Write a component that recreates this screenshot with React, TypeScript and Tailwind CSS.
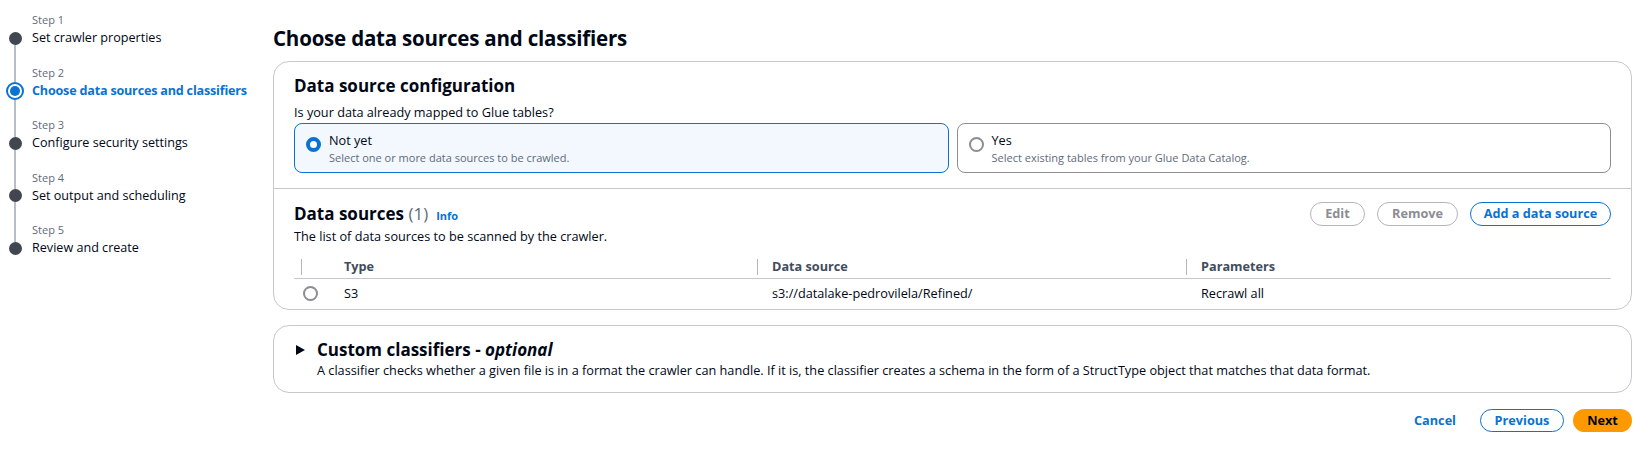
import React from "react";

const font = { fontFamily: '"Open Sans", "Noto Sans", sans-serif' };

function Radio({ checked }: { checked: boolean }) {
  return checked ? (
    <span className="inline-block w-[15px] h-[15px] rounded-full border-[4.5px] border-[#0972d3] bg-white shrink-0" />
  ) : (
    <span className="inline-block w-[15px] h-[15px] rounded-full border-2 border-[#8c8c94] bg-white shrink-0" />
  );
}

const steps = [
  { n: 1, label: "Set crawler properties" },
  { n: 2, label: "Choose data sources and classifiers", active: true },
  { n: 3, label: "Configure security settings" },
  { n: 4, label: "Set output and scheduling" },
  { n: 5, label: "Review and create" },
];

function Nav() {
  return (
    <div className="w-[273px] shrink-0 pt-[13px] pl-[8px]">
      {steps.map((s, i) => (
        <div key={s.n} className="flex h-[52.5px]">
          <div className="w-[14px] flex flex-col items-center mr-[10px]">
            <div
              className={`w-[2px] ${s.active ? "h-[16px]" : "h-[18.5px]"} ${
                i === 0 ? "bg-transparent" : "bg-[#b6bec9]"
              }`}
            />
            {s.active ? (
              <span className="w-[18px] h-[18px] rounded-full border-2 border-[#0972d3] flex items-center justify-center shrink-0">
                <span className="w-[10px] h-[10px] rounded-full bg-[#0972d3]" />
              </span>
            ) : (
              <span className="w-[13px] h-[13px] rounded-full bg-[#424650] shrink-0" />
            )}
            <div className={`w-[2px] flex-1 ${i === steps.length - 1 ? "bg-transparent" : "bg-[#b6bec9]"}`} />
          </div>
          <div>
            <div className="text-[11px] leading-[14px] text-[#5f6b7a]">Step {s.n}</div>
            <div
              className={`text-[12.6px] leading-[22px] whitespace-nowrap ${
                s.active ? "text-[#0972d3] font-bold tracking-[-0.2px]" : "text-[#000716]"
              }`}
            >
              {s.label}
            </div>
          </div>
        </div>
      ))}
    </div>
  );
}

export default function App() {
  return (
    <div className="w-[1637px] h-[453px] bg-white text-[#000716] flex" style={font}>
      <Nav />
      <div className="w-[1359px] pt-[24px]">
        <h1 className="text-[20.5px] leading-[28px] font-bold tracking-[-0.2px] mb-[9px]">
          Choose data sources and classifiers
        </h1>

        <div className="border border-[#c6c6cd] rounded-[16px]">
          <div className="px-[20px] pt-[12px] pb-[15px]">
            <h2 className="text-[17px] leading-[24px] font-bold">Data source configuration</h2>
            <div className="text-[12.7px] leading-[20px] mt-[4px]">Is your data already mapped to Glue tables?</div>
            <div className="grid grid-cols-2 gap-[8px] mt-[1px]">
              <div className="h-[50px] border border-[#0972d3] bg-[#f2f8fd] rounded-[8px] px-[11px] pt-[6px] flex gap-[8px]">
                <div className="pt-[4px]"><Radio checked /></div>
                <div>
                  <div className="text-[12.7px] leading-[20px]">Not yet</div>
                  <div className="text-[11px] leading-[16px] text-[#5f6b7a]">Select one or more data sources to be crawled.</div>
                </div>
              </div>
              <div className="h-[50px] border border-[#8c8c94] rounded-[8px] px-[11px] pt-[6px] flex gap-[8px]">
                <div className="pt-[4px]"><Radio checked={false} /></div>
                <div>
                  <div className="text-[12.7px] leading-[20px]">Yes</div>
                  <div className="text-[11px] leading-[16px] text-[#5f6b7a]">Select existing tables from your Glue Data Catalog.</div>
                </div>
              </div>
            </div>
          </div>
          <div className="border-t border-[#c6c6cd] px-[20px] pt-[13px] pb-[1px]">
            <div className="flex items-start justify-between">
              <div>
                <div className="flex items-baseline gap-[8px]">
                  <h2 className="text-[17px] leading-[24px] font-bold">
                    Data sources <span className="font-normal text-[#5f6b7a]">(1)</span>
                  </h2>
                  <span className="text-[11px] font-bold text-[#0972d3]">Info</span>
                </div>
                <div className="text-[12.7px] leading-[18px] mt-[1px]">The list of data sources to be scanned by the crawler.</div>
              </div>
              <div className="flex gap-[12px]">
                <button className="h-[24px] w-[55px] rounded-full border border-[#b4b4bb] text-[#8c8c94] text-[12.7px] font-bold">Edit</button>
                <button className="h-[24px] w-[81px] rounded-full border border-[#b4b4bb] text-[#8c8c94] text-[12.7px] font-bold">Remove</button>
                <button className="h-[24px] w-[141px] rounded-full border border-[#0972d3] text-[#0972d3] text-[12.7px] font-bold">Add a data source</button>
              </div>
            </div>
            <div className="mt-[11px]">
              <div className="flex h-[23px] items-center border-b border-[#c6c6cd] text-[12.7px] font-bold text-[#414d5c]">
                <div className="w-[50px] h-full flex items-center"><span className="ml-[7px] w-px h-[16px] bg-[#b4b4bb]" /></div>
                <div className="w-[413px]">Type</div>
                <div className="w-[429px] flex items-center"><span className="w-px h-[16px] bg-[#b4b4bb] mr-[14px]" />Data source</div>
                <div className="flex-1 flex items-center"><span className="w-px h-[16px] bg-[#b4b4bb] mr-[14px]" />Parameters</div>
              </div>
              <div className="flex h-[29px] items-center text-[12.7px]">
                <div className="w-[50px] pl-[9px] flex items-center"><Radio checked={false} /></div>
                <div className="w-[413px]">S3</div>
                <div className="w-[429px] pl-[15px]">s3://datalake-pedrovilela/Refined/</div>
                <div className="flex-1 pl-[15px]">Recrawl all</div>
              </div>
            </div>
          </div>
        </div>

        <div className="border border-[#c6c6cd] rounded-[16px] mt-[15px] px-[20px] pt-[12px] pb-[14px]">
          <div className="flex items-center gap-[9px]">
            <svg width="14" height="14" viewBox="0 0 14 14">
              <path d="M2 2 L11 7 L2 12 Z" fill="#000716" />
            </svg>
            <h2 className="text-[17px] leading-[24px] font-bold">
              Custom classifiers - <i>optional</i>
            </h2>
          </div>
          <div className="text-[12.7px] leading-[16px] pl-[23px]">
            A classifier checks whether a given file is in a format the crawler can handle. If it is, the classifier creates a schema in the form of a StructType object that matches that data format.
          </div>
        </div>

        <div className="flex justify-end items-center gap-[9px] mt-[16px]">
          <button className="text-[#0972d3] text-[12.7px] font-bold mr-[15px]">Cancel</button>
          <button className="h-[23px] w-[84px] rounded-full border border-[#0972d3] text-[#0972d3] text-[12.7px] font-bold">Previous</button>
          <button className="h-[23px] w-[59px] rounded-full bg-[#ff9900] text-[#000716] text-[12.7px] font-bold">Next</button>
        </div>
      </div>
    </div>
  );
}
